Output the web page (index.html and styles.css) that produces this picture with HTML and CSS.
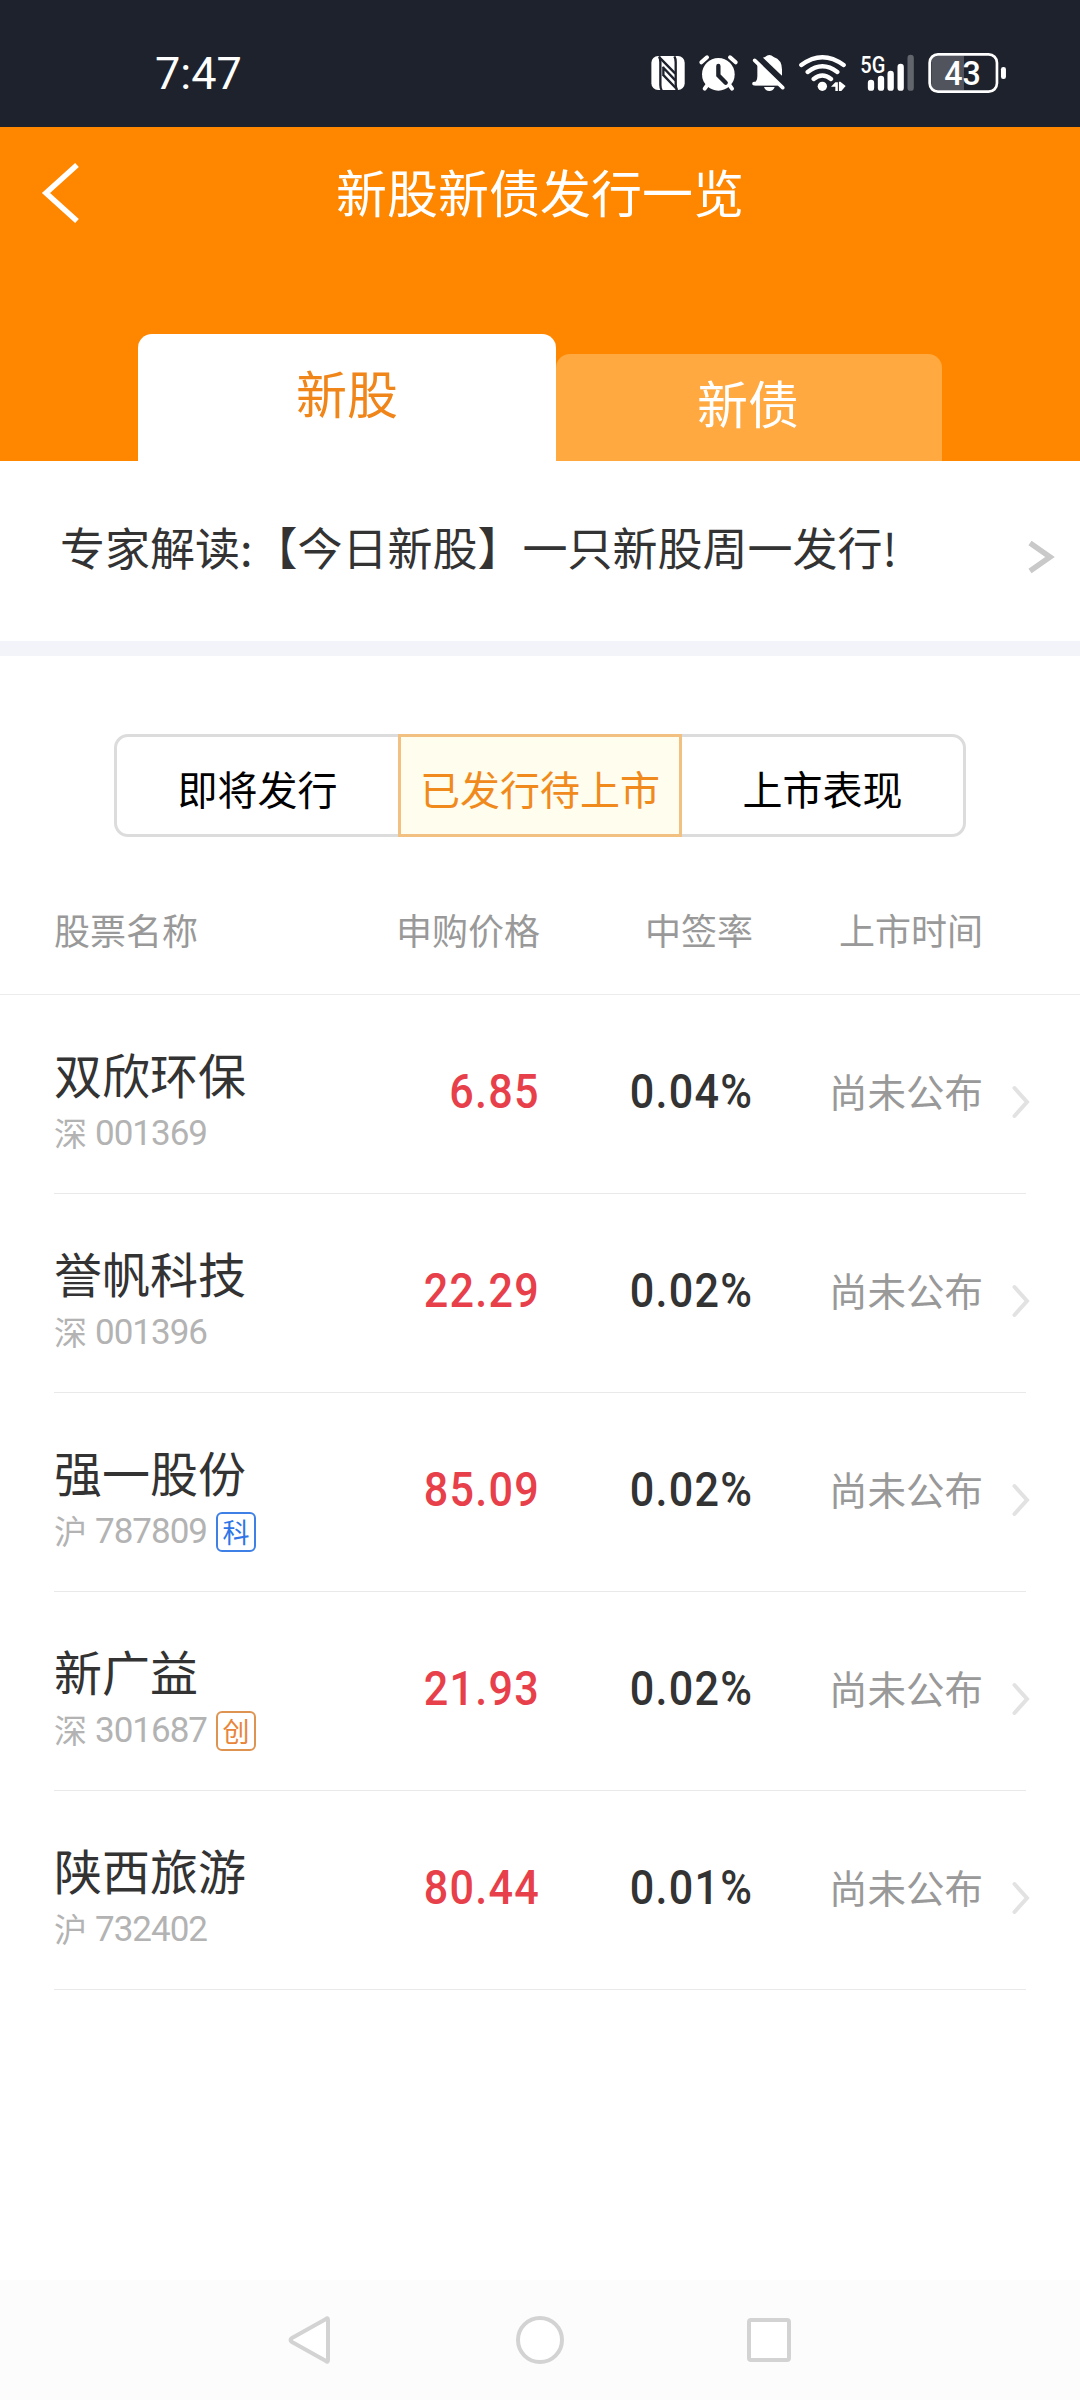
FILE: index.html
```html
<!DOCTYPE html>
<html lang="zh-CN">
<head>
<meta charset="utf-8">
<title>新股新债发行一览</title>
<link rel="stylesheet" href="styles.css">
</head>
<body>
<div class="status">
  <span class="clock">7:47</span>
  <svg class="status-icons" viewBox="90 60 1080 140">
    <rect x="94" y="78" width="100" height="102" rx="20" fill="#fff"/>
    <g fill="none" stroke="#1e222c" stroke-width="7">
      <path d="M117 79q4 6 4 18v68q0 10 4 16"/>
      <path d="M163 79q4 6 4 18v66q0 12 4 18"/>
      <path d="M118 82l48 49M128 111l38 40M128 133l42 44M130 110v26"/>
    </g>
    <circle cx="295" cy="133" r="49" fill="#fff"/>
    <g fill="none" stroke="#fff" stroke-width="12" stroke-linecap="round">
      <path d="M244 97l17-15M347 97l-17-15M262 165l-8 11M328 165l8 11"/>
    </g>
    <path d="M295 108v28l22 22" fill="none" stroke="#1e222c" stroke-width="13" stroke-linecap="round"/>
    <path fill="#fff" d="M400 163q12-10 12-24v-41l72 68h-78q-9-3-6-3zM420 89q7-6 15-8 13-12 26 0 25 8 25 38v20zM432 171h32q-4 12-16 12t-16-12z"/>
    <path d="M416 79l82 78" stroke="#1e222c" stroke-width="12"/>
    <path d="M404 91l84 82M402 161h70" stroke="#fff" stroke-width="11" stroke-linecap="round"/>
    <g fill="none" stroke="#fff" stroke-width="13" stroke-linecap="round">
      <path d="M544 105q63-47 127 0M563 126q44-34 89 0M581 147q26-21 52 0"/>
    </g>
    <circle cx="607" cy="169" r="14" fill="#fff"/>
    <path fill="#fff" d="M633 170l13-13h8v26h-8v-13zM656 155h5l16 13-13 15h-8z"/>
    <path d="M655 154v30" stroke="#1e222c" stroke-width="2.500"/>
    <text class="net" x="721" y="128" textLength="75" lengthAdjust="spacingAndGlyphs">5G</text>
    <g stroke="#fff" stroke-width="19" stroke-linecap="round">
      <path d="M753 159v14M783 147v26M812 132v41M842 111v62"/>
      <path d="M872 84v89" stroke="#62656c"/>
    </g>
    <path d="M934 77h98v104h-98z" fill="#51545c"/>
    <rect x="929" y="73" width="202" height="112" rx="25" fill="none" stroke="#fff" stroke-width="8"/>
    <rect x="1143" y="111" width="15" height="36" rx="7" fill="#fff"/>
    <text class="charge" x="973" y="164" textLength="110" lengthAdjust="spacingAndGlyphs">43</text>
  </svg>
</div>
<header class="head">
  <div class="bar">
    <svg class="back" viewBox="0 0 40 62"><path d="M36 3L5 31l31 28" fill="none" stroke="#fff" stroke-width="5.5"/></svg>
    <h1>新股新债发行一览</h1>
  </div>
  <div class="tabs">
    <div class="tab on">新股</div>
    <div class="tab">新债</div>
  </div>
</header>
<div class="news">
  <span>专家解读:【今日新股】一只新股周一发行!</span>
  <svg class="more" viewBox="0 0 28 34"><path d="M3 3l20 14L3 31" fill="none" stroke="#c9c9c9" stroke-width="5.5"/></svg>
</div>
<nav class="segments">
  <span>即将发行</span><span class="on">已发行待上市</span><span>上市表现</span>
</nav>
<div class="thead"><span>股票名称</span><span>申购价格</span><span>中签率</span><span>上市时间</span></div>
<main class="list">
  <div class="row">
    <div class="stock"><b>双欣环保</b><div class="code"><i>深</i><span>001369</span></div></div>
    <div class="num price"><span>6.85</span></div><div class="num"><span>0.04%</span></div><div class="when">尚未公布</div>
    <svg class="go" viewBox="0 0 18 36"><path d="M2.500 4L15 18 2.500 32"/></svg>
  </div>
  <div class="row">
    <div class="stock"><b>誉帆科技</b><div class="code"><i>深</i><span>001396</span></div></div>
    <div class="num price"><span>22.29</span></div><div class="num"><span>0.02%</span></div><div class="when">尚未公布</div>
    <svg class="go" viewBox="0 0 18 36"><path d="M2.500 4L15 18 2.500 32"/></svg>
  </div>
  <div class="row">
    <div class="stock"><b>强一股份</b><div class="code"><i>沪</i><span>787809</span><em>科</em></div></div>
    <div class="num price"><span>85.09</span></div><div class="num"><span>0.02%</span></div><div class="when">尚未公布</div>
    <svg class="go" viewBox="0 0 18 36"><path d="M2.500 4L15 18 2.500 32"/></svg>
  </div>
  <div class="row">
    <div class="stock"><b>新广益</b><div class="code"><i>深</i><span>301687</span><em class="cy">创</em></div></div>
    <div class="num price"><span>21.93</span></div><div class="num"><span>0.02%</span></div><div class="when">尚未公布</div>
    <svg class="go" viewBox="0 0 18 36"><path d="M2.500 4L15 18 2.500 32"/></svg>
  </div>
  <div class="row">
    <div class="stock"><b>陕西旅游</b><div class="code"><i>沪</i><span>732402</span></div></div>
    <div class="num price"><span>80.44</span></div><div class="num"><span>0.01%</span></div><div class="when">尚未公布</div>
    <svg class="go" viewBox="0 0 18 36"><path d="M2.500 4L15 18 2.500 32"/></svg>
  </div>
</main>
<footer class="sysnav">
  <svg viewBox="0 0 504 48" fill="#fff" stroke="#d3d3d3" stroke-width="4" stroke-linejoin="round">
    <path d="M38 3q2-2 2 1v40q0 3-2 1L4 26q-3-2 0-4z"/>
    <circle cx="252" cy="24" r="22"/>
    <rect x="461" y="4" width="40" height="40" rx="2"/>
  </svg>
</footer>
</body>
</html>
```
FILE: styles.css
```css
* { box-sizing: border-box; }
body {
  margin: 0;
  width: 1080px;
  height: 2400px;
  display: flex;
  flex-direction: column;
  background: #fff;
  color: #333;
  font-family: "Noto Sans CJK SC", sans-serif;
}
.status {
  height: 127px;
  padding: 22px 70px 0 155px;
  background: #1e222c;
  display: flex;
  justify-content: space-between;
  align-items: flex-start;
}
.clock {
  color: #fff;
  font: 400 45px/104px Roboto, sans-serif;
}
.status-icons { width: 360px; height: 46.67px; margin-top: 28px; }
.net { font: 500 69px Roboto, sans-serif; fill: #fff; }
.charge { font: 500 99px Roboto, sans-serif; fill: #fff; }

.head {
  height: 334px;
  background: #ff8700;
  display: flex;
  flex-direction: column;
  justify-content: space-between;
}
.bar {
  height: 132px;
  display: grid;
  grid-template-columns: 120px 1fr 120px;
  align-items: center;
}
.back { width: 40px; height: 62px; margin-left: 41px; }
.bar h1 {
  margin: 0;
  color: #fff;
  font-size: 51px;
  font-weight: 400;
  line-height: 128px;
  height: 132px;
  text-align: center;
}
.tabs {
  display: flex;
  align-items: flex-end;
  padding: 0 138px;
}
.tab {
  width: 386px;
  height: 107px;
  padding-right: 2px;
  border-radius: 14px 14px 0 0;
  background: #ffa940;
  color: #fff;
  font-size: 51px;
  line-height: 97px;
  text-align: center;
}
.tab.on {
  width: 418px;
  height: 127px;
  padding: 0;
  background: #fff;
  color: #f08519;
  line-height: 117px;
}
.news {
  height: 195px;
  padding: 0 25px 0 60px;
  border-bottom: 15px solid #f3f4f9;
  display: flex;
  justify-content: space-between;
  font-size: 45px;
  line-height: 172px;
}
.more { width: 28px; height: 34px; margin-top: 79px; }

.segments {
  height: 103px;
  margin: 78px 114px 0;
  border: 3px solid #dcdcdc;
  border-radius: 14px;
  display: flex;
  justify-content: space-between;
  color: #000;
  font-size: 40px;
  line-height: 102px;
  text-align: center;
}
.segments span { width: 281px; }
.segments .on {
  width: 284px;
  margin: -3px 0;
  border: 3px solid #f2c080;
  background: #fffdee;
  color: #f08a1c;
}
.thead {
  height: 158px;
  padding: 0 97px 0 54px;
  border-bottom: 1px solid #ececec;
  display: grid;
  grid-template-columns: 240px 246px 213px 230px;
  color: #999;
  font-size: 36px;
  line-height: 184px;
  text-align: right;
}
.thead span:first-child { text-align: left; }

.list { flex: 1; padding: 0 54px; }
.row {
  height: 199px;
  border-bottom: 1px solid #e9e9e9;
  display: grid;
  grid-template-columns: 240px 246px 213px 230px 46px;
}
.stock b {
  display: block;
  margin-top: 42px;
  font-size: 48px;
  font-weight: 400;
  line-height: 72px;
}
.code {
  display: flex;
  align-items: center;
  height: 50px;
  color: #b3b3b3;
}
.code i { width: 41px; padding-bottom: 4px; font-style: normal; font-size: 33px; line-height: 46px; }
.code span { font: 400 35px/46px Roboto, sans-serif; letter-spacing: -1px; }
.code em {
  width: 40px;
  height: 40px;
  margin-left: 9px;
  border: 2px solid #3f80e6;
  border-radius: 6px;
  color: #2f75e8;
  font-size: 27px;
  font-style: normal;
  line-height: 36px;
  text-align: center;
}
.code .cy { border-color: #df9350; color: #e8853a; }
.num {
  text-align: right;
  font: 500 49px/194px Roboto, sans-serif;
}
.num span {
  display: inline-block;
  transform: scaleX(.88);
  transform-origin: right;
  letter-spacing: 1.4px;
}
.price { color: #e8404a; }
.when { text-align: right; color: #999; font-size: 38.5px; line-height: 191px; }
.go { width: 18px; height: 36px; margin: 89px 0 0 29px; fill: none; stroke: #e2e2e2; stroke-width: 4; stroke-linecap: round; }

.sysnav {
  height: 120px;
  padding: 36px 288px;
  background: #fcfcfc;
}
.sysnav svg { display: block; width: 504px; height: 48px; }
```
